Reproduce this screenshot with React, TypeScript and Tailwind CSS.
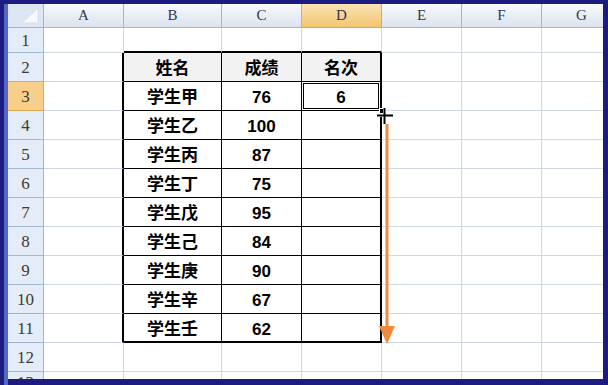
import React from "react";

const cols = [
  { key: "A", w: 80 },
  { key: "B", w: 98 },
  { key: "C", w: 80 },
  { key: "D", w: 80 },
  { key: "E", w: 80 },
  { key: "F", w: 80 },
  { key: "G", w: 80 },
];

const data: [string, string][] = [
  ["学生甲", "76"],
  ["学生乙", "100"],
  ["学生丙", "87"],
  ["学生丁", "75"],
  ["学生戊", "95"],
  ["学生己", "84"],
  ["学生庚", "90"],
  ["学生辛", "67"],
  ["学生壬", "62"],
];

const rowHeights = [25, 29, 29, 29, 29, 29, 29, 29, 29, 29, 29, 29, 29];

function cellClass(r: number, c: number): string {
  const inTable = r >= 2 && r <= 11 && c >= 1 && c <= 3;
  let cls = "box-border shrink-0 flex items-center justify-center ";
  if (r >= 2 && r <= 11 && c === 0) cls += "border-r-2 border-r-black ";
  else if (inTable && c === 3) cls += "border-r-2 border-r-black ";
  else if (inTable) cls += "border-r border-r-black ";
  else cls += "border-r border-r-[#d0d7e5] ";
  if ((r === 1 || r === 11) && c >= 1 && c <= 3) cls += "border-b-2 border-b-black ";
  else if (inTable) cls += "border-b border-b-black ";
  else cls += "border-b border-b-[#d0d7e5] ";
  if (r === 2 && inTable) cls += "bg-[#f2f2f2] ";
  else cls += "bg-white ";
  return cls;
}

function cellText(r: number, c: number): string {
  if (r === 2) {
    if (c === 1) return "姓名";
    if (c === 2) return "成绩";
    if (c === 3) return "名次";
  }
  if (r >= 3 && r <= 11) {
    const d = data[r - 3];
    if (c === 1) return d[0];
    if (c === 2) return d[1];
    if (c === 3 && r === 3) return "6";
  }
  return "";
}

export default function App() {
  return (
    <div className="relative w-[608px] h-[385px] bg-[#1c1c80] overflow-hidden">
      <div className="absolute left-[4px] top-[4px] w-[4px] h-[381px] bg-[#5468c8]" />
      <div className="absolute left-[8px] top-[4px] w-[595px] h-[375px] overflow-hidden bg-white">
        <div className="flex h-[24px]">
          <div className="box-border w-[36px] h-[24px] shrink-0 border-r border-b border-[#9eb6ce] bg-[#dde7f4] flex items-end justify-end">
            <svg width="30" height="18" viewBox="0 0 30 18" className="mb-[3px] mr-[3px]">
              <polygon points="28,2 28,17 12,17" fill="#f6f8fb" />
              <polygon points="28,2 28,17 12,17" fill="none" stroke="#c9d6e6" strokeWidth="0.6" />
            </svg>
          </div>
          {cols.map((c) => (
            <div
              key={c.key}
              style={{ width: c.w }}
              className={
                "box-border shrink-0 h-[24px] border-r border-b flex items-center justify-center text-[15px] text-[#2b3a4e] font-['Liberation_Serif',serif] " +
                (c.key === "D"
                  ? "bg-gradient-to-b from-[#fbe3b4] to-[#f3c46f] border-[#e0a84f]"
                  : "bg-gradient-to-b from-[#f8fafd] to-[#dbe3ee] border-[#9eb6ce]")
              }
            >
              {c.key}
            </div>
          ))}
        </div>
        {rowHeights.map((h, i) => {
          const r = i + 1;
          return (
            <div key={r} className="flex" style={{ height: h }}>
              <div
                className={
                  "box-border w-[36px] shrink-0 border-r border-b flex justify-center text-[17px] text-[#3a3a3a] font-['Liberation_Serif',serif] " +
                  (r === 13 ? "items-start pt-[1px] leading-[20px] " : "items-center pt-[1px] ") +
                  (r === 3
                    ? "bg-[#f8cf8a] border-[#e0a84f]"
                    : "bg-[#e4ecf7] border-[#9eb6ce]")
                }
              >
                {r}
              </div>
              {cols.map((c, ci) => {
                const txt = cellText(r, ci);
                const sel = r === 3 && ci === 3;
                return (
                  <div key={c.key} style={{ width: c.w }} className={cellClass(r, ci)}>
                    {sel ? (
                      <div className="w-full h-full box-border shadow-[inset_0_0_0_1px_white,inset_0_0_0_2px_black] flex items-center justify-center pt-[3px] text-[17px] font-bold text-black font-['Liberation_Sans','Noto_Sans_CJK_SC',sans-serif]">
                        {txt}
                      </div>
                    ) : (
                      <span className="pt-[3px] text-[17px] font-bold text-black leading-none font-['Liberation_Sans','Noto_Sans_CJK_SC',sans-serif]">
                        {txt}
                      </span>
                    )}
                  </div>
                );
              })}
            </div>
          );
        })}
      </div>
      <div className="absolute left-[379px] top-[108px] w-[6px] h-[6px] bg-black border border-white" />
      <svg className="absolute left-[376px] top-[107px]" width="18" height="18" viewBox="0 0 18 18">
        <rect x="7" y="0" width="3" height="18" fill="white" />
        <rect x="0" y="7" width="18" height="3" fill="white" />
        <rect x="7.5" y="1" width="2" height="16" fill="black" />
        <rect x="1" y="7.5" width="16" height="2" fill="black" />
      </svg>
      <svg className="absolute left-[378px] top-[124px]" width="18" height="222" viewBox="0 0 18 222">
        <rect x="7.5" y="0" width="3" height="206" fill="#f28a3c" />
        <polygon points="1,202 17,202 9,220" fill="#f28a3c" />
      </svg>
    </div>
  );
}
